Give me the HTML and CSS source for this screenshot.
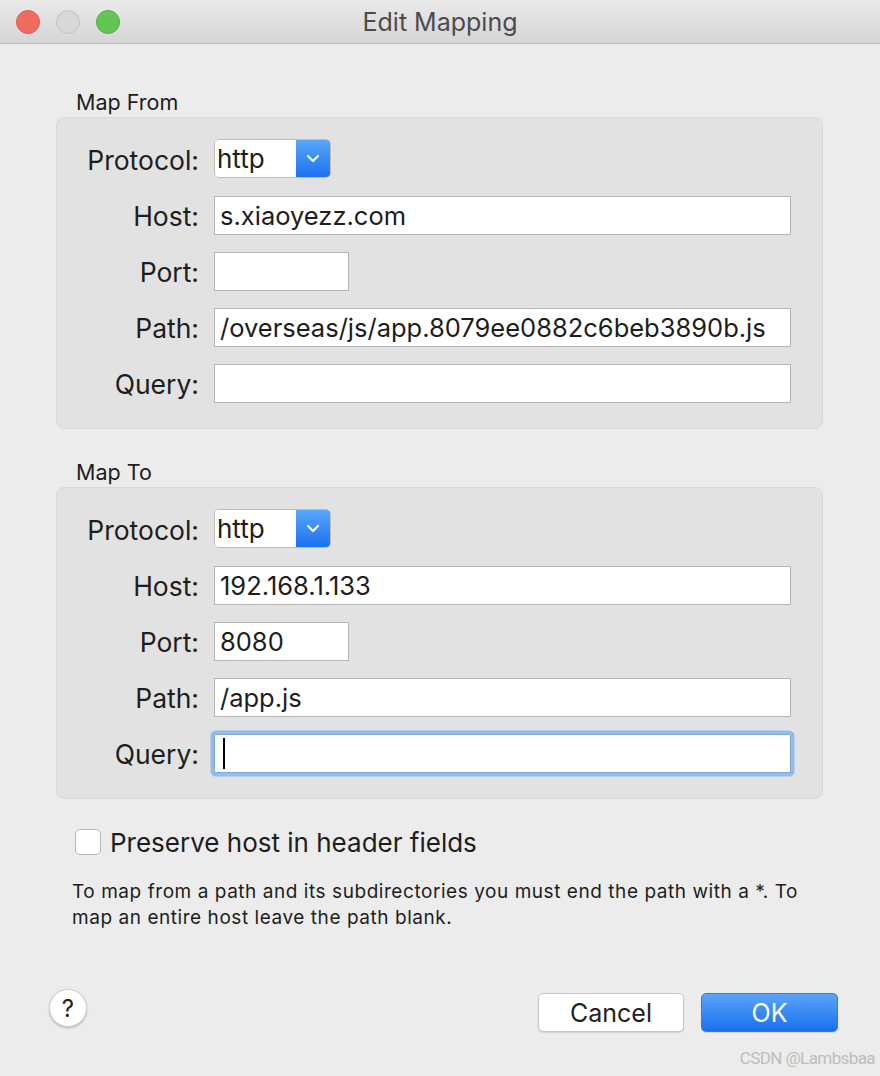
FILE: index.html
```html
<!DOCTYPE html>
<html lang="en">
<head>
    <meta charset="UTF-8">
    <title>Edit Mapping</title>
    <link rel="stylesheet" href="styles.css">
</head>
<body>
<div class="window">
    <div class="titlebar">
        <div class="lights">
            <span class="light red"></span>
            <span class="light gray"></span>
            <span class="light green"></span>
        </div>
        <div class="title">Edit Mapping</div>
    </div>

    <div class="content">
        <div class="caption">Map From</div>
        <div class="group">
            <div class="row">
                <label>Protocol:</label>
                <div class="select">
                    <span class="select-value">http</span>
                    <span class="select-btn">
                        <svg width="14" height="9" viewBox="0 0 14 9"><path d="M2 2l5 5 5-5" fill="none" stroke="#fff" stroke-width="2.2" stroke-linecap="round" stroke-linejoin="round"/></svg>
                    </span>
                </div>
            </div>
            <div class="row">
                <label>Host:</label>
                <div class="field wide">s.xiaoyezz.com</div>
            </div>
            <div class="row">
                <label>Port:</label>
                <div class="field short"></div>
            </div>
            <div class="row">
                <label>Path:</label>
                <div class="field wide">/overseas/js/app.8079ee0882c6beb3890b.js</div>
            </div>
            <div class="row">
                <label>Query:</label>
                <div class="field wide"></div>
            </div>
        </div>

        <div class="caption second">Map To</div>
        <div class="group">
            <div class="row">
                <label>Protocol:</label>
                <div class="select">
                    <span class="select-value">http</span>
                    <span class="select-btn">
                        <svg width="14" height="9" viewBox="0 0 14 9"><path d="M2 2l5 5 5-5" fill="none" stroke="#fff" stroke-width="2.2" stroke-linecap="round" stroke-linejoin="round"/></svg>
                    </span>
                </div>
            </div>
            <div class="row">
                <label>Host:</label>
                <div class="field wide">192.168.1.133</div>
            </div>
            <div class="row">
                <label>Port:</label>
                <div class="field short">8080</div>
            </div>
            <div class="row">
                <label>Path:</label>
                <div class="field wide">/app.js</div>
            </div>
            <div class="row">
                <label>Query:</label>
                <div class="field wide focused"><span class="caret"></span></div>
            </div>
        </div>

        <div class="check-row">
            <span class="checkbox"></span>
            <span>Preserve host in header fields</span>
        </div>

        <p class="hint">To map from a path and its subdirectories you must end the path with a *. To map an entire host leave the path blank.</p>
    </div>

    <div class="footer">
        <button class="help">?</button>
        <div class="actions">
            <button class="btn">Cancel</button>
            <button class="btn primary">OK</button>
        </div>
    </div>

    <div class="watermark">CSDN @Lambsbaa</div>
</div>
</body>
</html>
```

FILE: styles.css
```css
body {
    margin: 0;
    font-family: Inter, "Noto Sans", sans-serif;
    color: #1d1d1d;
    background: #ececec;
}

.window {
    position: relative;
    width: 880px;
    height: 1076px;
    background: #ececec;
}

.titlebar {
    position: relative;
    height: 43px;
    border-bottom: 1px solid #bdbdbd;
    background: linear-gradient(#ebeaeb, #d6d5d6);
    display: flex;
    align-items: center;
}

.lights {
    display: flex;
    gap: 16px;
    padding-left: 16px;
}

.light {
    width: 22px;
    height: 22px;
    border-radius: 50%;
    border: 1px solid transparent;
}

.red {
    background: #ef6b5f;
    border-color: #de5a4e;
}

.gray {
    background: #d8d8d8;
    border-color: #c3c3c3;
}

.green {
    background: #62c554;
    border-color: #52b044;
}

.title {
    position: absolute;
    left: 0;
    right: 0;
    text-align: center;
    font-size: 25px;
    color: #4b4b4b;
}

.content {
    padding: 0 57px 0 56px;
}

.caption {
    height: 30px;
    line-height: 30px;
    margin-top: 43px;
    padding-left: 20px;
    font-size: 21.5px;
}

.caption.second {
    margin-top: 28px;
}

.group {
    background: #e2e2e2;
    border: 1px solid #d9d9d9;
    border-radius: 8px;
    padding: 22px 0 25px;
    display: flex;
    flex-direction: column;
    gap: 17px;
}

.row {
    display: flex;
    align-items: center;
    height: 39px;
}

.row label {
    width: 142px;
    text-align: right;
    padding-right: 15px;
    font-size: 26.5px;
}

.field {
    box-sizing: border-box;
    height: 39px;
    background: #fff;
    border: 1px solid #b5b5b5;
    font-size: 25.5px;
    line-height: 37px;
    padding-left: 5px;
    white-space: nowrap;
}

.field.wide {
    width: 577px;
}

.field.short {
    width: 135px;
}

.field.focused {
    border-color: #7eaadb;
    border-radius: 2px;
    box-shadow: 0 0 0 3.5px #93bde9;
}

.caret {
    display: inline-block;
    width: 2px;
    height: 31px;
    margin-left: 3px;
    margin-top: 3px;
    vertical-align: top;
    background: #000;
}

.select {
    display: flex;
    height: 39px;
    width: 117px;
    box-sizing: border-box;
    border-radius: 5px;
    overflow: hidden;
    border: 1px solid #bcbcbc;
    margin-top: -3px;
}

.select-value {
    flex: 1;
    background: #fff;
    font-size: 26px;
    line-height: 37px;
    padding-left: 2px;
}

.select-btn {
    width: 34px;
    background: linear-gradient(#58a7f9, #1b71ef);
    display: flex;
    align-items: center;
    justify-content: center;
}

.check-row {
    display: flex;
    align-items: center;
    gap: 9px;
    height: 30px;
    margin-top: 28px;
    padding-left: 19px;
    font-size: 26px;
}

.checkbox {
    width: 24px;
    height: 24px;
    background: #fff;
    border: 1px solid #b8b8b8;
    border-radius: 5px;
}

.hint {
    margin: 22px 0 0 16px;
    width: 760px;
    font-size: 19px;
    line-height: 26px;
    letter-spacing: 0.55px;
}

.footer {
    display: flex;
    align-items: center;
    justify-content: space-between;
    padding: 0 42px 0 49px;
    margin-top: 62px;
}

.help {
    width: 38px;
    height: 38px;
    border-radius: 50%;
    border: 1px solid #cfcfcf;
    background: #fff;
    box-shadow: 0 1px 2px rgba(0, 0, 0, 0.25);
    font-family: Inter, sans-serif;
    font-size: 24px;
    color: #222;
    padding: 0;
    margin-top: -9px;
}

.actions {
    display: flex;
    gap: 17px;
}

.btn {
    width: 146px;
    height: 39px;
    border-radius: 5px;
    border: 1px solid #c6c6c6;
    background: #fff;
    box-shadow: 0 1px 1px rgba(0, 0, 0, 0.12);
    font-family: Inter, sans-serif;
    font-size: 25px;
    color: #222;
}

.btn.primary {
    width: 137px;
    border-color: #2a7cf0;
    background: linear-gradient(#5ba5f8, #1a6ff0);
    color: #fff;
}

.watermark {
    position: absolute;
    right: 5px;
    bottom: 8px;
    font-family: Roboto, sans-serif;
    font-size: 17px;
    color: #bdbdbd;
    letter-spacing: -0.6px;
}
```
